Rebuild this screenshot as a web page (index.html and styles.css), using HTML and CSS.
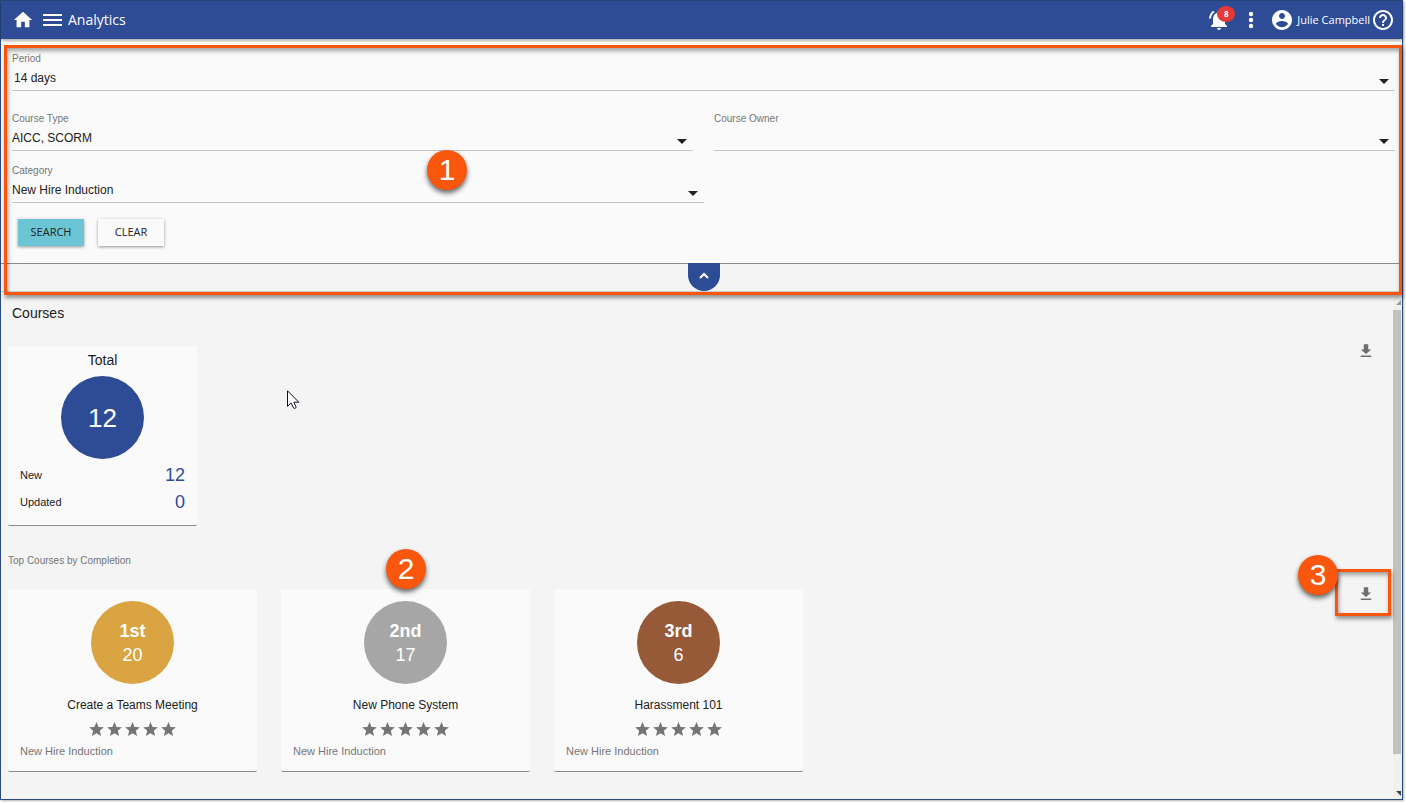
FILE: index.html
```html
<!DOCTYPE html>
<html lang="en">
<head>
    <meta charset="UTF-8">
    <meta name="viewport" content="width=device-width, initial-scale=1.0">
    <title>Analytics</title>

    <link rel="stylesheet" href="styles.css">
</head>
<body>
    <div class="app">

        <header class="topbar">
            <a href="#" class="home-link" aria-label="Home">
                <svg width="22" height="22" viewBox="0 0 24 24"><path d="M10 20v-6h4v6h5v-8h3L12 3 2 12h3v8z"/></svg>
            </a>
            <button type="button" class="icon-button menu-button" aria-label="Menu">
                <svg width="19" height="12" viewBox="0 0 19 12"><path d="M0 0h19v2H0zM0 5h19v2H0zM0 10h19v2H0z"/></svg>
            </button>
            <h1>Analytics</h1>

            <div class="topbar-right">
                <button type="button" class="icon-button bell-button" aria-label="Notifications">
                    <svg width="24" height="24" viewBox="0 0 24 24"><path d="M7.58 4.08L6.15 2.65C3.75 4.48 2.17 7.3 2.03 10.5h2c.15-2.65 1.51-4.97 3.55-6.42zM18 11c0-3.07-1.64-5.64-4.5-6.32V4c0-.83-.67-1.5-1.5-1.5s-1.5.67-1.5 1.5v.68C7.63 5.36 6 7.92 6 11v5l-2 2v1h16v-1l-2-2v-5zm-6 11c.14 0 .27-.01.4-.04.65-.14 1.18-.58 1.44-1.18.1-.24.15-.5.15-.78h-4c.01 1.1.9 2 2.01 2z"/></svg>
                    <span class="count">8</span>
                </button>
                <button type="button" class="icon-button dots-button" aria-label="More">
                    <svg width="24" height="24" viewBox="0 0 24 24"><circle cx="12" cy="6" r="2.2"/><circle cx="12" cy="12" r="2.2"/><circle cx="12" cy="18" r="2.2"/></svg>
                </button>
                <a href="#" class="user-link">
                    <svg width="24" height="24" viewBox="0 0 24 24"><path d="M12 2C6.48 2 2 6.48 2 12s4.48 10 10 10 10-4.48 10-10S17.52 2 12 2zm0 3c1.66 0 3 1.34 3 3s-1.34 3-3 3-3-1.34-3-3 1.34-3 3-3zm0 14.2c-2.5 0-4.71-1.28-6-3.22.03-1.99 4-3.08 6-3.08 1.99 0 5.97 1.09 6 3.08-1.29 1.94-3.5 3.22-6 3.22z"/></svg>
                    <span>Julie Campbell</span>
                </a>
                <a href="#" class="help-link" aria-label="Help">
                    <svg width="24" height="24" viewBox="0 0 24 24"><path d="M11 18h2v-2h-2v2zm1-16C6.48 2 2 6.48 2 12s4.48 10 10 10 10-4.48 10-10S17.52 2 12 2zm0 18c-4.41 0-8-3.59-8-8s3.59-8 8-8 8 3.59 8 8-3.59 8-8 8zm0-14c-2.21 0-4 1.79-4 4h2c0-1.1.9-2 2-2s2 .9 2 2c0 2-3 1.75-3 5h2c0-2.25 3-2.5 3-5 0-2.21-1.79-4-4-4z"/></svg>
                </a>
            </div>
        </header>

        <section class="filters">
            <form class="filter-form">
                <div class="field field-period">
                    <label for="period">Period</label>
                    <select id="period" name="period">
                        <option>14 days</option>
                    </select>
                </div>
                <div class="field-row">
                    <div class="field">
                        <label for="course-type">Course Type</label>
                        <select id="course-type" name="course-type">
                            <option>AICC, SCORM</option>
                        </select>
                    </div>
                    <div class="field">
                        <label for="course-owner">Course Owner</label>
                        <select id="course-owner" name="course-owner">
                            <option></option>
                        </select>
                    </div>
                </div>
                <div class="field field-half">
                    <label for="category">Category</label>
                    <select id="category" name="category">
                        <option>New Hire Induction</option>
                    </select>
                </div>
                <div class="form-buttons">
                    <button type="button" class="btn btn-search">SEARCH</button>
                    <button type="button" class="btn">CLEAR</button>
                </div>
            </form>
            <div class="collapse-bar">
                <button type="button" class="collapse-button" aria-label="Hide filters">
                    <svg width="10" height="7" viewBox="0 0 10 7"><path d="M1 6l4-4 4 4" fill="none" stroke="#fff" stroke-width="2"/></svg>
                </button>
            </div>
            <div class="highlight highlight-filters"></div>
            <span class="marker marker-filters">1</span>
        </section>

        <main class="results">
            <div class="content">
                <h2>Courses</h2>
                <div class="section-row">
                    <article class="card total-card">
                        <h3>Total</h3>
                        <div class="circle circle-total">12</div>
                        <dl>
                            <div><dt>New</dt><dd>12</dd></div>
                            <div><dt>Updated</dt><dd>0</dd></div>
                        </dl>
                    </article>
                    <button type="button" class="icon-button download" aria-label="Download courses">
                        <svg width="18" height="18" viewBox="0 0 24 24"><path d="M19 10h-4V3H9v7H5l7 6 7-6zM5 18v2h14v-2H5z"/></svg>
                    </button>
                </div>

                <h4>Top Courses by Completion</h4>
                <div class="section-row">
                    <div class="top-courses">
                        <article class="card course-card">
                            <div class="circle gold"><strong>1st</strong><span>20</span></div>
                            <p class="course-name">Create a Teams Meeting</p>
                            <div class="stars" role="img" aria-label="5 stars">
                                <svg><use href="#star"/></svg><svg><use href="#star"/></svg><svg><use href="#star"/></svg><svg><use href="#star"/></svg><svg><use href="#star"/></svg>
                            </div>
                            <p class="course-category">New Hire Induction</p>
                        </article>
                        <article class="card course-card">
                            <div class="circle silver"><strong>2nd</strong><span>17</span></div>
                            <p class="course-name">New Phone System</p>
                            <div class="stars" role="img" aria-label="5 stars">
                                <svg><use href="#star"/></svg><svg><use href="#star"/></svg><svg><use href="#star"/></svg><svg><use href="#star"/></svg><svg><use href="#star"/></svg>
                            </div>
                            <p class="course-category">New Hire Induction</p>
                            <span class="marker marker-course">2</span>
                        </article>
                        <article class="card course-card">
                            <div class="circle bronze"><strong>3rd</strong><span>6</span></div>
                            <p class="course-name">Harassment 101</p>
                            <div class="stars" role="img" aria-label="5 stars">
                                <svg><use href="#star"/></svg><svg><use href="#star"/></svg><svg><use href="#star"/></svg><svg><use href="#star"/></svg><svg><use href="#star"/></svg>
                            </div>
                            <p class="course-category">New Hire Induction</p>
                        </article>
                    </div>
                    <div class="download-wrap">
                        <button type="button" class="icon-button download" aria-label="Download top courses">
                            <svg width="18" height="18" viewBox="0 0 24 24"><path d="M19 10h-4V3H9v7H5l7 6 7-6zM5 18v2h14v-2H5z"/></svg>
                        </button>
                        <div class="highlight highlight-download"></div>
                        <span class="marker marker-download">3</span>
                    </div>
                </div>
            </div>

            <div class="scrollbar" aria-hidden="true">
                <svg width="8" height="12" viewBox="0 0 8 12"><path d="M3 7l5-5v5z" fill="#999"/></svg>
                <div class="track"><div class="thumb"></div></div>
                <svg width="8" height="12" viewBox="0 0 8 12"><path d="M3 4h5v5z" fill="#444"/></svg>
            </div>

            <svg class="cursor" width="13" height="21" viewBox="0 0 13 21"><path d="M.5.8v15.6l3.6-3.4 2.6 5.2c1 .6 2.2 0 2.4-1.1L6.9 12.2h4.9z" fill="#fff" stroke="#112" stroke-width="1"/></svg>
        </main>
    </div>

    <svg class="icon-defs" width="0" height="0">
        <symbol id="star" viewBox="2 2 20 19"><path d="M12 17.27L18.18 21l-1.64-7.03L22 9.24l-7.19-.61L12 2 9.19 8.63 2 9.24l5.46 4.73L5.82 21z"/></symbol>
    </svg>
</body>
</html>
```
FILE: styles.css
```css
/* Basic Styles */
* {
    box-sizing: border-box;
}

body {
    margin: 0;
    padding: 0 3px 3px 0;
    min-height: 100vh;
    display: flex;
    background-color: #fff;
    font-family: "Liberation Sans", Arial, sans-serif;
    font-size: 12px;
    color: #212121;
}

h1, h2, h3, h4, p, dl, dd {
    margin: 0;
    font-weight: normal;
}

svg {
    display: block;
    fill: currentColor;
}

.icon-defs {
    position: absolute;
}

.app {
    flex: 1;
    display: flex;
    flex-direction: column;
    border: 1px solid #2a4b80;
    background-color: #f4f4f4;
    box-shadow: 1px 1px 2px rgba(0, 0, 0, 0.3);
}

.icon-button {
    padding: 0;
    border: none;
    background: none;
    color: inherit;
    cursor: pointer;
}

/* Top bar */
.topbar {
    height: 38px;
    padding: 0 7px 0 11px;
    display: flex;
    align-items: center;
    background-color: #2e4b96;
    color: #fff;
    font-family: "Open Sans", sans-serif;
    box-shadow: 0 1px 4px rgba(0, 0, 0, 0.4);
}

.topbar a {
    color: inherit;
    text-decoration: none;
}

.menu-button {
    margin: 0 6px 0 9px;
}

.topbar h1 {
    padding-bottom: 2px;
    font-size: 14px;
}

.topbar-right {
    margin-left: auto;
    display: flex;
    align-items: center;
}

.bell-button {
    position: relative;
    margin-right: 8px;
}

.count {
    position: absolute;
    top: -2px;
    left: 10px;
    width: 18px;
    height: 16px;
    border-radius: 50%;
    background-color: #e53935;
    font-family: "Open Sans", sans-serif;
    font-size: 8px;
    font-weight: bold;
    line-height: 16px;
    text-align: center;
}

.user-link {
    display: flex;
    align-items: center;
    gap: 3px;
    margin: 0 1px 0 7px;
    font-size: 11px;
}

.user-link span {
    padding-bottom: 2px;
}

/* Filters */
.filters {
    position: relative;
    margin-top: 3px;
    border-bottom: 1px solid #d0d0d0;
}

.filter-form {
    padding: 9px 7px 17px 11px;
    background-color: #fafafa;
    border-bottom: 1px solid #8c8c8c;
}

.field {
    position: relative;
}

.field label {
    display: block;
    font-size: 10px;
    line-height: 16px;
    color: #757575;
}

.field select {
    display: block;
    width: 100%;
    height: 24px;
    padding: 0 0 2px;
    appearance: none;
    border: none;
    border-bottom: 1px solid #c6c6c6;
    border-radius: 0;
    background: none;
    font-family: inherit;
    font-size: 12px;
    color: #212121;
}

/* drop-down arrow */
.field::after {
    content: "";
    position: absolute;
    right: 6px;
    bottom: 7px;
    border: 5px solid transparent;
    border-top-color: #212121;
    border-bottom: none;
    pointer-events: none;
}

.field-period select {
    padding-left: 2px;
}

.field-row {
    display: grid;
    grid-template-columns: 1fr 1fr;
    gap: 21px;
    margin: 20px 0 12px;
}

.field-half {
    width: 50%;
}

.form-buttons {
    display: flex;
    gap: 14px;
    margin: 16px 0 0 6px;
}

.btn {
    width: 66px;
    height: 27px;
    padding: 0 0 2px;
    border: none;
    background-color: #fafafa;
    font-family: "Open Sans", sans-serif;
    font-size: 11px;
    color: #212121;
    box-shadow: 0 1px 3px rgba(0, 0, 0, 0.4);
    cursor: pointer;
}

.btn-search {
    background-color: #6cc5d5;
}

.collapse-bar {
    padding-left: 4px;
    display: flex;
    justify-content: center;
}

.collapse-button {
    width: 32px;
    height: 28px;
    margin-top: -1px;
    padding: 0 0 3px;
    display: flex;
    align-items: center;
    justify-content: center;
    border: none;
    border-radius: 0 0 16px 16px;
    background-color: #2e4b96;
    cursor: pointer;
}

/* Callouts */
.highlight {
    position: absolute;
    z-index: 1;
    border: 3px solid #f9560e;
    box-shadow: 1px 3px 4px rgba(0, 0, 0, 0.4), inset 1px 3px 4px rgba(0, 0, 0, 0.35);
    pointer-events: none;
}

.highlight-filters {
    top: 3px;
    right: 0;
    bottom: -4px;
    left: 3px;
}

.highlight-download {
    top: -20px;
    right: -16px;
    width: 56px;
    height: 47px;
}

.marker {
    position: absolute;
    z-index: 1;
    width: 40px;
    height: 40px;
    border-radius: 50%;
    background-color: #f9560e;
    color: #fff;
    font-size: 30px;
    line-height: 40px;
    text-align: center;
    box-shadow: 0 3px 5px rgba(0, 0, 0, 0.6);
}

.marker-filters {
    top: 108px;
    left: 426px;
}

.marker-course {
    top: -40px;
    left: 105px;
}

.marker-download {
    top: -34px;
    right: 37px;
}

/* Results */
.results {
    position: relative;
    flex: 1;
    display: flex;
}

.content {
    flex: 1;
    padding: 12px 18px 26px 7px;
}

.content h2 {
    padding-left: 4px;
    margin-bottom: 24px;
    font-size: 14px;
    line-height: 18px;
}

.content h4 {
    margin: 28px 0 21px;
    font-size: 10px;
    line-height: 14px;
    color: #757575;
}

.section-row {
    display: flex;
    justify-content: space-between;
    align-items: flex-start;
}

.card {
    background-color: #fafafa;
    border-bottom: 1px solid #8c8c8c;
    border-radius: 2px;
}

.circle {
    width: 83px;
    height: 83px;
    margin: 0 auto;
    display: flex;
    flex-direction: column;
    align-items: center;
    justify-content: center;
    border-radius: 50%;
    color: #fff;
    font-size: 18px;
    line-height: 24px;
}

.circle-total {
    background-color: #2e4b96;
    font-size: 26px;
}

.gold {
    background-color: #d9a441;
}

.silver {
    background-color: #a6a6a6;
}

.bronze {
    background-color: #965a38;
}

.total-card {
    width: 189px;
    padding: 5px 12px 9px;
}

.total-card h3 {
    margin-bottom: 7px;
    font-size: 14px;
    line-height: 18px;
    text-align: center;
}

.total-card dl {
    margin-top: 3px;
}

.total-card dl div {
    display: flex;
    justify-content: space-between;
    align-items: center;
    line-height: 27px;
}

.total-card dt {
    font-size: 11px;
}

.total-card dd {
    font-size: 18px;
    color: #2e4b96;
}

.top-courses {
    display: flex;
    gap: 24px;
}

.course-card {
    position: relative;
    width: 249px;
    padding: 12px;
}

.course-name {
    margin-top: 12px;
    line-height: 18px;
    text-align: center;
}

.stars {
    display: flex;
    justify-content: center;
    gap: 3px;
    margin: 8px 0 7px;
    color: #757575;
}

.stars svg {
    width: 15px;
    height: 14px;
}

.course-category {
    font-size: 11px;
    line-height: 16px;
    color: #757575;
}

.download {
    color: #6e6e6e;
    margin-top: -4px;
}

.download-wrap {
    position: relative;
}

/* Scroll bar */
.scrollbar {
    width: 9px;
    padding: 6px 1px 0 0;
    display: flex;
    flex-direction: column;
    background-color: #f0f0f0;
}

.track {
    flex: 1;
}

.thumb {
    height: 93%;
    background-color: #c1c1c1;
}

.cursor {
    position: absolute;
    top: 98px;
    left: 286px;
}
```
